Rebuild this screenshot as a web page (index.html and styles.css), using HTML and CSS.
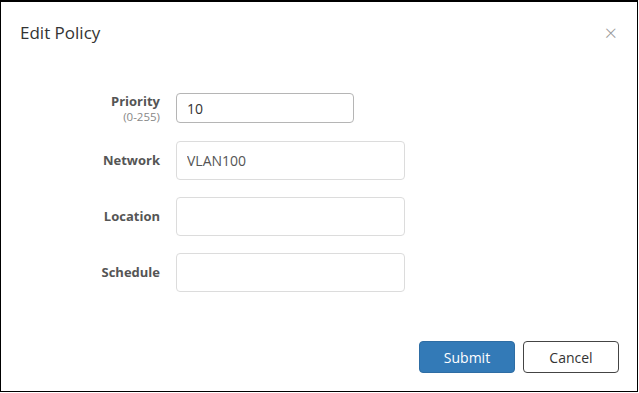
FILE: index.html
```html
<!DOCTYPE html>
<html lang="en">
<head>
    <meta charset="UTF-8">
    <title>Edit Policy</title>
    <link rel="stylesheet" href="styles.css">
</head>
<body>
    <div class="modal">
        <div class="modal-header">
            <h1>Edit Policy</h1>
            <span class="close">&times;</span>
        </div>
        <div class="modal-body">
            <div class="form-row priority-row">
                <label>Priority<small>(0-255)</small></label>
                <input type="text" class="field field-short" value="10">
            </div>
            <div class="form-row">
                <label>Network</label>
                <input type="text" class="field" value="VLAN100">
            </div>
            <div class="form-row">
                <label>Location</label>
                <input type="text" class="field">
            </div>
            <div class="form-row">
                <label>Schedule</label>
                <input type="text" class="field">
            </div>
        </div>
        <div class="modal-footer">
            <button class="btn btn-primary">Submit</button>
            <button class="btn btn-default">Cancel</button>
        </div>
    </div>
</body>
</html>
```

FILE: styles.css
```css
* {
    margin: 0;
    padding: 0;
    box-sizing: border-box;
}

body {
    font-family: "Open Sans", "Noto Sans", sans-serif;
    background-color: #ffffff;
    color: #333333;
}

/* Dialog frame */
.modal {
    width: 638px;
    height: 392px;
    border: 1px solid #000000;
    border-top-width: 2px;
    display: flex;
    flex-direction: column;
}

.modal-header {
    display: flex;
    justify-content: space-between;
    align-items: flex-start;
    padding: 19px 20px 0 19px;
    height: 62px;
}

.modal-header h1 {
    font-size: 17px;
    font-weight: normal;
    line-height: 24px;
    color: #333333;
}

.close {
    font-size: 22px;
    line-height: 22px;
    color: #999999;
    font-weight: 300;
}

/* Form rows */
.modal-body {
    flex: 1;
    padding-top: 29px;
    display: flex;
    flex-direction: column;
    gap: 17px;
}

.form-row {
    display: flex;
    align-items: center;
    gap: 16px;
}

.form-row label {
    width: 159px;
    text-align: right;
    font-size: 13px;
    font-weight: bold;
    color: #555555;
    display: flex;
    flex-direction: column;
    align-items: flex-end;
    line-height: 17px;
}

.form-row label small {
    font-size: 11.5px;
    font-weight: normal;
    color: #888888;
    line-height: 14px;
}

.priority-row {
    align-items: flex-start;
}

.field {
    width: 229px;
    height: 39px;
    border: 1px solid #dcdcdc;
    border-radius: 4px;
    padding: 0 10px;
    font-family: inherit;
    font-size: 14px;
    color: #555555;
    outline: none;
}

.field-short {
    width: 178px;
    height: 30px;
    border-color: #b5b5b5;
    color: #333333;
}

/* Buttons */
.modal-footer {
    display: flex;
    justify-content: flex-end;
    gap: 8px;
    padding: 0 18px 18px 0;
}

.btn {
    width: 96px;
    height: 32px;
    border-radius: 4px;
    font-family: inherit;
    font-size: 14px;
    cursor: pointer;
}

.btn-primary {
    background-color: #337ab7;
    border: 1px solid #2e6da4;
    color: #ffffff;
}

.btn-default {
    background-color: #ffffff;
    border: 1px solid #444444;
    color: #333333;
}
```
